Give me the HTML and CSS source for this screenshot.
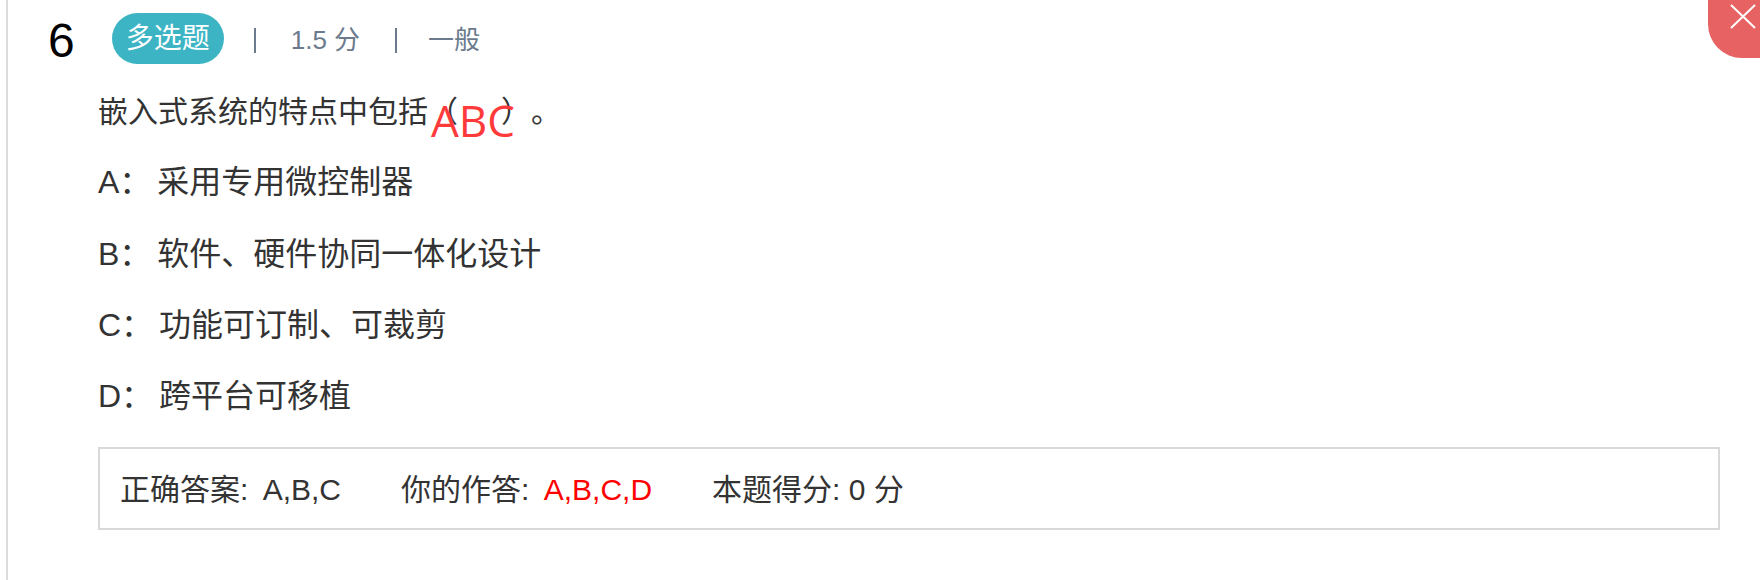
FILE: index.html
```html
<!DOCTYPE html>
<html lang="zh-CN">
<head>
<meta charset="utf-8">
<title>题目 6</title>
<link rel="stylesheet" href="styles.css">
</head>
<body>
<div class="card">
  <div class="head">
    <span class="num">6</span>
    <span class="badge">多选题</span>
    <span class="sep sep1"></span>
    <span class="meta">1.5 分</span>
    <span class="sep sep2"></span>
    <span class="meta meta2">一般</span>
  </div>
  <div class="body">
    <div class="question">嵌入式系统的特点中包括（<span class="blank"><span class="ans">ABC</span></span>）。</div>
    <div class="option">A<span class="colon">：</span> 采用专用微控制器</div>
    <div class="option">B<span class="colon">：</span> 软件、硬件协同一体化设计</div>
    <div class="option">C<span class="colon">：</span> 功能可订制、可裁剪</div>
    <div class="option">D<span class="colon">：</span> 跨平台可移植</div>
    <div class="result">
      <span class="item">正确答案: <span class="val">A,B,C</span></span>
      <span class="item">你的作答: <span class="val wrong">A,B,C,D</span></span>
      <span class="item">本题得分: 0 分</span>
    </div>
  </div>
  <div class="close">
    <svg width="26" height="25" viewBox="0 0 26 25"><path d="M1 1 L25 24 M25 1 L1 24" stroke="#fff" stroke-width="2" fill="none"/></svg>
  </div>
</div>
</body>
</html>
```

FILE: styles.css
```css
html, body {
  margin: 0;
  padding: 0;
  background: #fff;
}
body {
  font-family: "Liberation Sans", "Noto Sans CJK SC", sans-serif;
  color: #333;
  text-spacing-trim: space-all;
}
.card {
  margin-left: 6px;
  border-left: 2px solid #dcdcdc;
  height: 580px;
  box-sizing: border-box;
  overflow: hidden;
}
.head {
  display: flex;
  align-items: center;
  height: 51px;
  margin-top: 13px;
  padding-left: 40px;
}
.num {
  font-size: 48px;
  line-height: 51px;
  color: #000;
  padding-top: 4px;
}
.badge {
  margin-left: 37px;
  height: 51px;
  line-height: 51px;
  padding: 0 14px;
  border-radius: 26px;
  background: #3db4c4;
  color: #fff;
  font-size: 28px;
}
.sep {
  display: inline-block;
  width: 2px;
  height: 25px;
  background: #6b7b8d;
  margin-top: 4px;
}
.sep1 {
  margin-left: 30px;
  margin-right: 35px;
}
.sep2 {
  margin-left: 35px;
  margin-right: 31px;
}
.meta {
  font-size: 26px;
  color: #6b7b8d;
  line-height: 51px;
  padding-top: 3px;
}
.body {
  padding-left: 90px;
  margin-top: 12px;
  padding-right: 40px;
}
.question {
  font-size: 30px;
  line-height: 71.33px;
}
.blank {
  display: inline-block;
  position: relative;
  width: 43px;
  height: 0;
}
.ans {
  position: absolute;
  left: -27px;
  top: -24px;
  font-family: "Open Sans", "Liberation Sans", sans-serif;
  font-size: 44px;
  line-height: 44px;
  color: #ff3a3a;
  white-space: nowrap;
}
.option {
  font-size: 32px;
  line-height: 71.33px;
  height: 71.33px;
}
.colon {
  font-family: "Noto Sans CJK TC", sans-serif;
  line-height: 1;
  margin-right: -3px;
}
.result {
  margin-top: 14px;
  border: 2px solid #d9d9d9;
  height: 83px;
  box-sizing: border-box;
  display: flex;
  align-items: center;
  gap: 60px;
  padding-left: 20px;
  font-size: 30px;
  line-height: 40px;
  padding-top: 3px;
}
.val {
  margin-left: 6px;
}
.wrong {
  color: #f00;
}
.close {
  position: absolute;
  top: 0;
  right: 0;
  width: 52px;
  height: 58px;
  background: #e76262;
  border-bottom-left-radius: 34px;
}
.close svg {
  position: absolute;
  left: 22px;
  top: 4px;
}
```
